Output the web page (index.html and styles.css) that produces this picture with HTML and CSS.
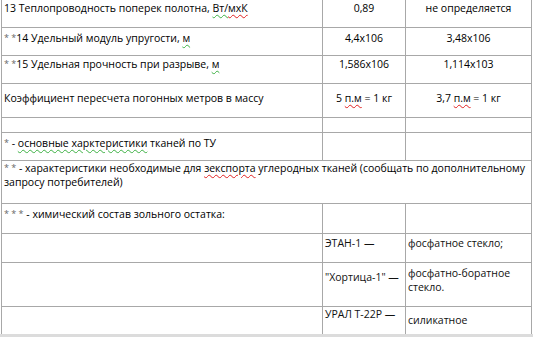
FILE: index.html
```html
<!DOCTYPE html>
<html lang="ru">
<head>
<meta charset="utf-8">
<link rel="stylesheet" href="styles.css">
</head>
<body>
<div class="page">
<table class="spec">
  <colgroup>
    <col class="c1"><col class="c2"><col class="c3">
  </colgroup>
  <tr class="r1">
    <td>13 Теплопроводность поперек полотна, <span class="sg">Вт/</span><span class="sr">мхК</span></td>
    <td class="num">0,89</td>
    <td class="num">не определяется</td>
  </tr>
  <tr class="r2">
    <td><span class="ast">* *</span>14 Удельный модуль упругости, <span class="sg">м</span></td>
    <td class="num">4,4х106</td>
    <td class="num">3,48х106</td>
  </tr>
  <tr class="r3">
    <td><span class="ast">* *</span>15 Удельная прочность при разрыве, <span class="sg">м</span></td>
    <td class="num">1,586х106</td>
    <td class="num">1,114х103</td>
  </tr>
  <tr class="r4">
    <td>Коэффициент пересчета погонных метров в массу</td>
    <td class="num">5 <span class="sr">п.м</span> = 1 кг</td>
    <td class="num">3,7 <span class="sr">п.м</span> = 1 кг</td>
  </tr>
  <tr class="r5">
    <td></td><td></td><td></td>
  </tr>
  <tr class="r6">
    <td><span class="ast">*</span> - <span class="sg">основные харктеристики</span> тканей по ТУ</td>
    <td></td><td></td>
  </tr>
  <tr class="r7">
    <td colspan="3"><span class="ast">* *</span> - характеристики необходимые для <span class="sr">зекспорта</span> углеродных тканей (сообщать по дополнительному<br>запросу потребителей)</td>
  </tr>
  <tr class="r8">
    <td><span class="ast">* * *</span> - химический состав зольного остатка:</td>
    <td></td><td></td>
  </tr>
  <tr class="r9">
    <td></td>
    <td class="name">ЭТАН-1 —</td>
    <td class="val">фосфатное стекло;</td>
  </tr>
  <tr class="r10">
    <td></td>
    <td class="name">"Хортица-1" —</td>
    <td class="val">фосфатно-боратное<br>стекло.</td>
  </tr>
  <tr class="r11">
    <td></td>
    <td class="name">УРАЛ Т-22Р —</td>
    <td class="val">силикатное</td>
  </tr>
</table>
</div>
</body>
</html>
```
FILE: styles.css
```css
html {
  background: #dcdcdc;
}
body {
  margin: 0;
  font-family: "Open Sans", "Noto Sans", sans-serif;
  font-size: 10.5px;
  color: #000;
}
.page {
  background: #fff;
  height: 334px;
  padding-left: 1px;
  overflow: hidden;
}
.spec {
  border-collapse: collapse;
  table-layout: fixed;
  width: 530px;
}
.c1 { width: 321px; }
.c2 { width: 83px; }
.c3 { width: 126px; }
.spec td {
  box-sizing: border-box;
  border: 1px solid #a8a8a8;
  padding: 2px 2px 0 2px;
  vertical-align: top;
  line-height: 14px;
  white-space: nowrap;
  overflow: hidden;
}
.spec tr.r1 { height: 27px; }
.spec tr.r1 td { border-top: none; padding-top: 1px; }
.spec tr.r2 { height: 28px; }
.spec tr.r2 td { padding-top: 3px; }
.spec tr.r3 { height: 28px; }
.spec tr.r3 td { padding-top: 1px; }
.spec tr.r4 { height: 34px; }
.spec tr.r4 td { padding-top: 7px; }
.spec tr.r5 { height: 15px; }
.spec tr.r5 td { padding: 0; }
.spec tr.r6 { height: 28px; }
.spec tr.r6 td { padding-top: 3px; }
.spec tr.r7 { height: 43px; }
.spec tr.r7 td { padding-top: 0; }
.spec tr.r8 { height: 30px; }
.spec tr.r8 td { padding-top: 3px; }
.spec tr.r9 { height: 29px; }
.spec tr.r9 td { padding-top: 2px; }
.spec tr.r10 { height: 44px; }
.spec tr.r10 td.name { padding-top: 7px; }
.spec tr.r10 td.val { padding-top: 3px; }
.spec tr.r11 { height: 28px; }
.spec tr.r11 td.name { padding-top: 0; }
.spec tr.r11 td.val { padding-top: 6px; }
.spec td.num { text-align: center; }
.ast {
  color: #666;
  font-size: 9px;
  vertical-align: 1px;
}
.sg {
  text-decoration: underline wavy #3cb043;
  text-decoration-thickness: 1px;
  text-underline-offset: 2px;
}
.sr {
  text-decoration: underline wavy #e02020;
  text-decoration-thickness: 1px;
  text-underline-offset: 2px;
}
.name, .val { color: #111; }
```
